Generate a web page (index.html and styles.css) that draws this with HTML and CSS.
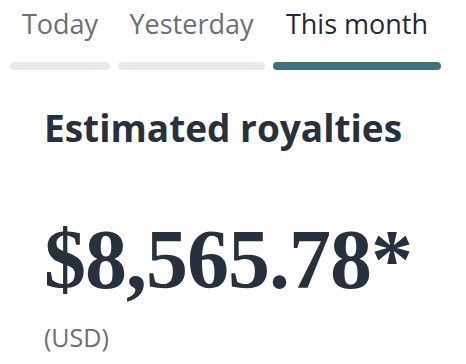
FILE: index.html
```html
<!DOCTYPE html>
<html>
<head>
<meta charset="utf-8">
<link rel="stylesheet" href="styles.css">
</head>
<body>
<div class="page">
  <nav class="tabs">
    <div class="tab tab-today"><span class="tab-label">Today</span><span class="tab-bar"></span></div>
    <div class="tab tab-yesterday"><span class="tab-label">Yesterday</span><span class="tab-bar"></span></div>
    <div class="tab tab-month active"><span class="tab-label">This month</span><span class="tab-bar"></span></div>
  </nav>
  <section class="summary">
    <h1 class="title">Estimated royalties</h1>
    <div class="amount">$8,565.78*</div>
    <div class="currency">(USD)</div>
  </section>
</div>
</body>
</html>
```
FILE: styles.css
```css
html, body {
  margin: 0;
  padding: 0;
  background: #ffffff;
}
.page {
  width: 466px;
  height: 364px;
  overflow: hidden;
  font-family: "Open Sans", "Noto Sans", sans-serif;
}
.tabs {
  display: flex;
  gap: 8px;
  padding: 1px 0 0 10px;
}
.tab {
  display: flex;
  flex-direction: column;
  align-items: stretch;
}
.tab-today { width: 100px; }
.tab-yesterday { width: 147px; }
.tab-month { width: 168px; }
.tab-label {
  display: block;
  font-size: 27px;
  line-height: 45px;
  color: #6b7075;
  text-align: center;
  white-space: nowrap;
}
.tab.active .tab-label {
  color: #1f2937;
}
.tab-bar {
  display: block;
  height: 8px;
  margin-top: 16px;
  border-radius: 4px;
  background: #e8e9e9;
}
.tab.active .tab-bar {
  background: #41717f;
}
.summary {
  padding: 0 0 0 44px;
}
.title {
  margin: 36px 0 0 0;
  font-size: 37px;
  line-height: 44px;
  font-weight: 700;
  color: #27303d;
}
.amount {
  margin-top: 68px;
  font-family: "Liberation Serif", serif;
  font-weight: 700;
  font-size: 84px;
  line-height: 84px;
  color: #27303d;
  letter-spacing: -1px;
}
.currency {
  margin-top: 20px;
  font-size: 25px;
  line-height: 30px;
  color: #6b7075;
}
```
